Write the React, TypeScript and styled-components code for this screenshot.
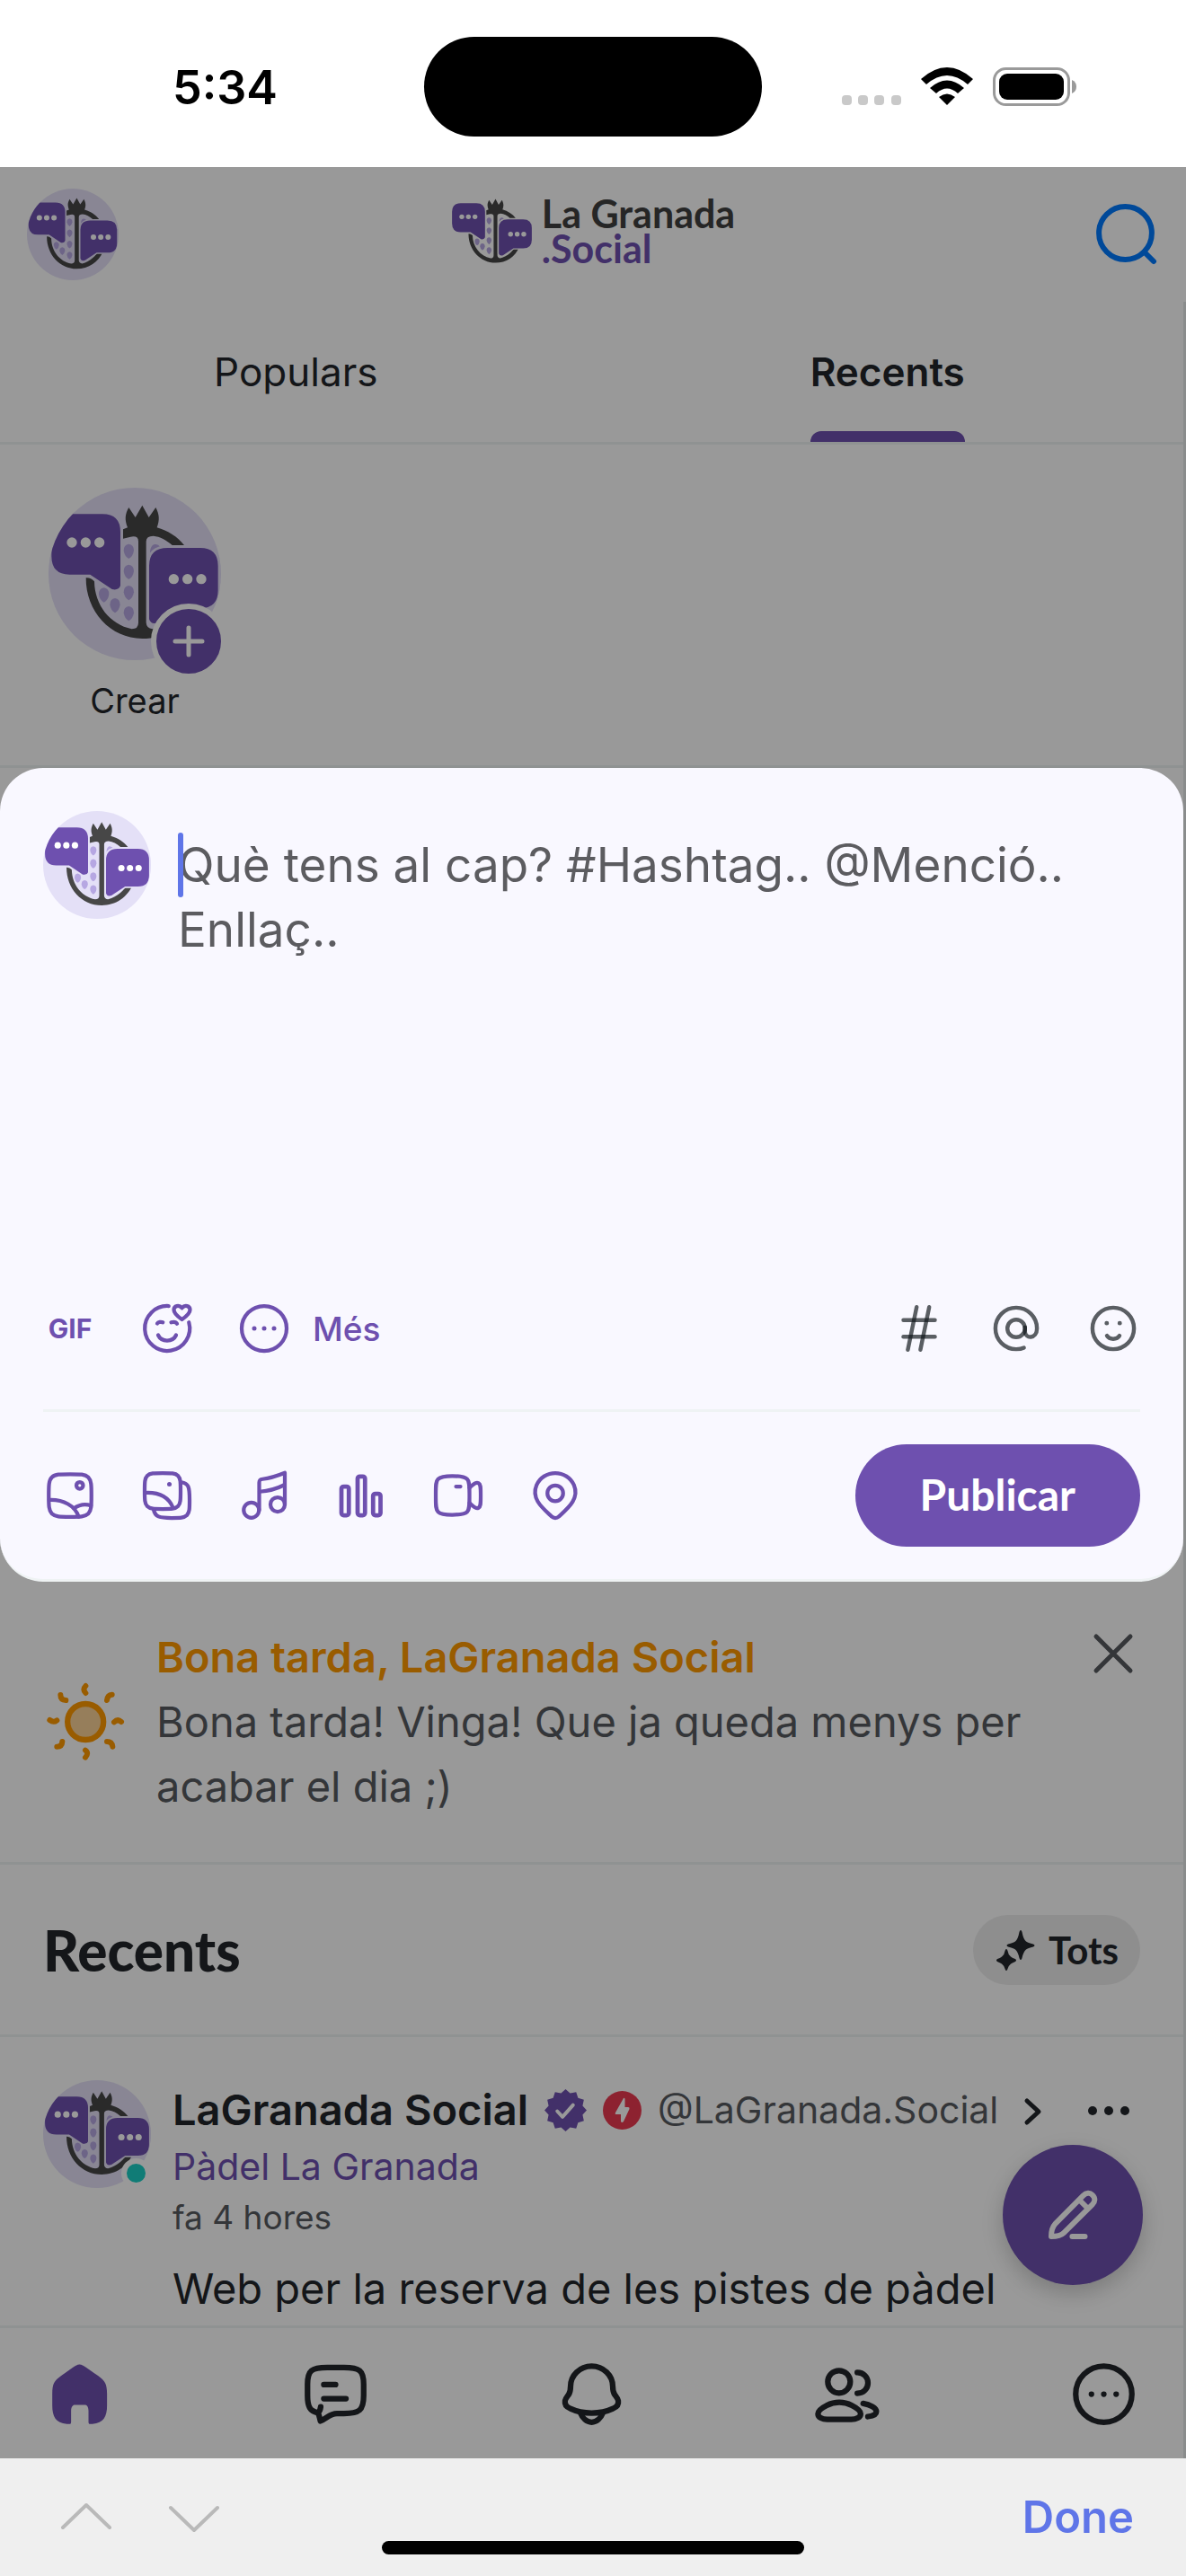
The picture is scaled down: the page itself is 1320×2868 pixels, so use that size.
import React from "react";
import styled, { createGlobalStyle, css } from "styled-components";

const color = {
  ink: "#22262b",
  muted: "#575b5f",
  accent: "#6e50af",
  line: "#eff3f4",
  surface: "#f9f8ff",
  ios: "#5f75e8",
};
const sans = `Inter, "Liberation Sans", sans-serif`;
const display = `Lato, Inter, sans-serif`;

const GlobalStyle = createGlobalStyle`
  *, *::before, *::after { box-sizing: border-box; }
  html, body, #root { margin: 0; }
  body { font-family: ${sans}; color: ${color.ink}; background: #fff; }
  button { font: inherit; color: inherit; background: none; border: 0; padding: 0; margin: 0; }
  a { color: inherit; text-decoration: none; }
  h1, h2, h3, p { margin: 0; }
  svg { display: block; flex: none; }
`;

const Screen = styled.div`
  min-height: 100vh;
  display: flex;
  flex-direction: column;
`;

/* ---------- device chrome ---------- */

const StatusBar = styled.div`
  display: grid;
  grid-template-columns: 1fr 376px 1fr;
  align-items: center;
  padding: 41px 0 34px;
`;
const Clock = styled.time`
  padding: 3px 0 0 192px;
  color: #000;
  font-size: 52px;
  line-height: 60px;
  font-weight: 600;
`;
const Island = styled.div`
  height: 111px;
  border-radius: 56px;
  background: #000;
`;
const Signals = styled.div`
  display: flex;
  align-items: center;
  justify-content: flex-end;
  gap: 22px;
  padding-right: 121px;
`;

const KeyboardBar = styled.div`
  position: relative;
  display: flex;
  align-items: center;
  justify-content: space-between;
  height: 131px;
  padding: 0 58px 0 66px;
  background: #efefef;
`;
const Arrows = styled.div`
  display: flex;
  gap: 60px;
`;
const DoneButton = styled.button`
  color: ${color.ios};
  font-size: 49px;
  line-height: 60px;
  font-weight: 600;
`;
const HomeIndicator = styled.div`
  position: absolute;
  left: 50%;
  bottom: 24px;
  width: 470px;
  height: 15px;
  margin-left: -235px;
  border-radius: 8px;
  background: #000;
`;

/* ---------- page ---------- */

const Page = styled.div`
  position: relative;
  flex: 1;
  display: flex;
  flex-direction: column;
  background: #fff;
`;
const Scrim = styled.div`
  position: absolute;
  inset: 0;
  z-index: 1;
  background: rgba(0, 0, 0, 0.4);
`;
const Header = styled.header`
  display: grid;
  grid-template-columns: 1fr auto 1fr;
  align-items: center;
  height: 150px;
  padding: 0 30px;
`;
const Brand = styled.a`
  display: flex;
  align-items: center;
  gap: 10px;
  padding-bottom: 8px;
`;
const BrandName = styled.span`
  font-family: ${display};
  font-size: 43px;
  line-height: 39px;
  font-weight: 700;
  color: #404040;
`;
const BrandAccent = styled.span`
  display: block;
  color: ${color.accent};
`;
const SearchButton = styled.button`
  justify-self: end;
  color: #007aff;
`;
const Feed = styled.main`
  flex: 1;
  display: flex;
  flex-direction: column;
  border-right: 3px solid #e6e9ea;
`;
const Tabs = styled.nav`
  display: grid;
  grid-template-columns: 1fr 1fr;
  height: 159px;
  border-bottom: 3px solid ${color.line};
`;
const Tab = styled.a<{ $active?: boolean }>`
  position: relative;
  justify-self: center;
  display: flex;
  align-items: center;
  font-size: 44px;
  font-weight: ${(p) => (p.$active ? 600 : 400)};
  ${(p) =>
    p.$active &&
    css`
      &::after {
        content: "";
        position: absolute;
        left: 0;
        right: 0;
        bottom: 0;
        height: 12px;
        border-radius: 12px 12px 0 0;
        background: ${color.accent};
      }
    `}
`;
const Stories = styled.section`
  display: flex;
  padding: 48px 48px 45px;
  border-bottom: 3px solid ${color.line};
`;
const Story = styled.button`
  display: flex;
  flex-direction: column;
  align-items: center;
  gap: 18px;
  width: 204px;
  font-size: 38px;
  line-height: 54px;
`;
const AvatarFrame = styled.span`
  position: relative;
  display: block;
  flex: none;
`;
const PlusBadge = styled.span`
  position: absolute;
  right: -6px;
  bottom: -21px;
  display: grid;
  place-items: center;
  width: 84px;
  height: 84px;
  border: 6px solid #fff;
  border-radius: 50%;
  background: ${color.accent};
  color: #fff;
`;

/* ---------- composer ---------- */

const Composer = styled.form`
  position: relative;
  z-index: 2;
  padding: 48px 48px 36px;
  border-bottom: 3px solid ${color.line};
  border-radius: 48px;
  background: ${color.surface};
`;
const Editor = styled.div`
  display: flex;
  align-items: flex-start;
  gap: 30px;
  height: 546px;
`;
const TextWrap = styled.label`
  position: relative;
  flex: 1;
  padding-top: 24px;
`;
const TextArea = styled.textarea`
  display: block;
  width: 100%;
  height: 432px;
  padding: 0;
  border: 0;
  outline: 0;
  resize: none;
  overflow: hidden;
  background: transparent;
  color: ${color.ink};
  caret-color: transparent;
  font-family: ${sans};
  font-size: 53px;
  line-height: 72px;
  &::placeholder {
    color: #5c5c60;
    opacity: 1;
  }
`;
const Caret = styled.span`
  position: absolute;
  left: 0;
  top: 24px;
  width: 6px;
  height: 72px;
  border-radius: 3px;
  background: ${color.ios};
`;
const ToolRow = styled.div`
  display: flex;
  align-items: center;
  justify-content: space-between;
  & + & {
    margin-top: 60px;
    padding-top: 36px;
    border-top: 3px solid ${color.line};
  }
`;
const Tools = styled.div<{ $muted?: boolean }>`
  display: flex;
  align-items: center;
  gap: 48px;
  color: ${(p) => (p.$muted ? "rgba(15, 20, 25, 0.68)" : color.accent)};
`;
const Tool = styled.button`
  display: flex;
  align-items: center;
  justify-content: center;
  gap: 24px;
  min-width: 60px;
  height: 60px;
  font-size: 37px;
  font-weight: 500;
`;
const GifMark = styled.span`
  width: 60px;
  text-align: center;
  font-size: 30px;
  font-weight: 700;
`;
const PublishButton = styled.button`
  height: 114px;
  padding: 0 72px 4px;
  border-radius: 57px;
  background: ${color.accent};
  color: #fff;
  font-family: ${display};
  font-size: 48px;
  font-weight: 700;
`;

/* ---------- feed ---------- */

const Notice = styled.section`
  display: flex;
  align-items: center;
  gap: 32px;
  padding: 48px;
  border-bottom: 3px solid ${color.line};
  font-size: 47px;
  line-height: 72px;
  color: ${color.muted};
`;
const NoticeText = styled.div`
  flex: 1;
`;
const NoticeTitle = styled.h2`
  font-size: 47px;
  line-height: 72px;
  font-weight: 600;
  color: #ff9900;
`;
const CloseButton = styled.button`
  align-self: flex-start;
  padding: 0 6px;
`;
const FeedHead = styled.div`
  display: flex;
  align-items: center;
  justify-content: space-between;
  height: 192px;
  padding: 0 48px;
  border-bottom: 3px solid ${color.line};
`;
const FeedTitle = styled.h1`
  font-family: ${display};
  font-size: 62px;
  line-height: 72px;
  font-weight: 900;
`;
const FilterButton = styled.button`
  display: flex;
  align-items: center;
  gap: 14px;
  height: 78px;
  padding: 0 24px;
  border-radius: 39px;
  background: #ededed;
  font-family: ${display};
  font-size: 42px;
  font-weight: 700;
`;
const Post = styled.article`
  flex: 1;
  display: flex;
  align-items: flex-start;
  gap: 24px;
  padding: 48px 48px 0;
`;
const OnlineDot = styled.span`
  position: absolute;
  right: 0;
  bottom: 0;
  width: 33px;
  height: 33px;
  border: 6px solid #fff;
  border-radius: 50%;
  background: #1ccfc5;
`;
const PostBody = styled.div`
  flex: 1;
  min-width: 0;
`;
const PostHead = styled.div`
  display: flex;
  align-items: center;
  gap: 18px;
  height: 66px;
  white-space: nowrap;
`;
const Author = styled.a`
  font-size: 47px;
  line-height: 60px;
  font-weight: 600;
`;
const Handle = styled.span`
  font-size: 41px;
  line-height: 60px;
  color: ${color.muted};
`;
const PostMenu = styled.button`
  margin-left: auto;
  padding: 9px 12px;
`;
const Community = styled.a`
  display: block;
  font-size: 41px;
  line-height: 60px;
  color: ${color.accent};
`;
const Posted = styled.time`
  display: block;
  font-size: 37px;
  line-height: 54px;
  color: ${color.muted};
`;
const PostText = styled.p`
  padding-top: 16px;
  font-size: 47px;
  line-height: 72px;
`;
const ComposeFab = styled.button`
  position: absolute;
  right: 48px;
  bottom: 193px;
  display: grid;
  place-items: center;
  width: 156px;
  height: 156px;
  border-radius: 50%;
  background: ${color.accent};
  color: #fff;
  box-shadow: 0 9px 24px rgba(0, 0, 0, 0.2);
`;
const BottomNav = styled.nav`
  display: flex;
  align-items: center;
  justify-content: space-between;
  height: 148px;
  padding: 2px 51px 0;
  border-top: 3px solid ${color.line};
`;
const NavItem = styled.a<{ $active?: boolean }>`
  color: ${(p) => (p.$active ? color.accent : color.ink)};
`;

/* ---------- drawings ---------- */

function Icon({
  size = 60,
  stroke = 1.7,
  children,
}: {
  size?: number;
  stroke?: number;
  children: React.ReactNode;
}) {
  return (
    <svg
      width={size}
      height={size}
      viewBox="0 0 24 24"
      fill="none"
      stroke="currentColor"
      strokeWidth={stroke}
      strokeLinecap="round"
      strokeLinejoin="round"
      aria-hidden="true"
    >
      {children}
    </svg>
  );
}

const seeds = [
  [310, 250],
  [310, 319],
  [310, 389],
  [310, 458],
  [264, 431],
  [227, 396],
];

function Pomegranate({ halo, hole }: { halo: string; hole: string }) {
  return (
    <g>
      <path
        d="M355 98 L377 138 L400 105 C412 128 414 146 404 172 C440 182 474 204 495 231 L455 231 C436 214 414 202 392 200 Q368 200 368 218 V490 Q369 509 389 511 C440 497 478 462 495 422 L520 434 C492 500 430 543 355 543 C248 543 166 452 167 340 Q182 338 195 352 C196 432 248 496 320 511 Q342 511 342 490 V218 Q342 198 316 203 L291 209 V178 L306 172 C296 146 297 128 310 105 L332 138 Z"
        fill="#474747"
      />
      {seeds.map(([x, y]) => (
        <path
          key={`${x}-${y}`}
          d={`M${x} ${y - 23} q17 2 17 22 q-3 20 -17 27 q-14 -7 -17 -27 q0 -20 17 -22Z`}
          fill="#b6a7e2"
        />
      ))}
      <path d="M381 254 C382 234 392 227 400 228 Q410 229 414 236 Q396 242 381 258Z" fill="#b6a7e2" />
      <path
        d="M112 127 H222 Q282 127 282 187 V366 Q276 383 254 378 L181 329 H112 Q52 329 52 268 V187 Q52 127 112 127Z"
        fill={color.accent}
        stroke={halo}
        strokeWidth="16"
        paintOrder="stroke"
      />
      <path
        d="M440 240 H548 Q608 240 608 300 V382 Q608 442 548 442 H480 L407 490 Q384 498 378 478 V300 Q378 240 440 240Z"
        fill={color.accent}
        stroke={halo}
        strokeWidth="16"
        paintOrder="stroke"
      />
      {[120, 166, 212].map((x) => (
        <circle key={x} cx={x} cy="222" r="17" fill={hole} />
      ))}
      {[460, 506, 552].map((x) => (
        <circle key={x} cx={x} cy="344" r="17" fill={hole} />
      ))}
    </g>
  );
}

function Avatar({ size }: { size: number }) {
  const id = React.useId();
  return (
    <svg width={size} height={size} viewBox="42 39 576 576" role="img" aria-label="LaGranada Social">
      <clipPath id={id}>
        <circle cx="330" cy="327" r="288" />
      </clipPath>
      <g clipPath={`url(#${id})`}>
        <rect x="42" y="39" width="576" height="576" fill="#e4e0f7" />
        <Pomegranate halo="#e4e0f7" hole="#ffffff" />
      </g>
    </svg>
  );
}

function Verified() {
  const pts = Array.from({ length: 24 }, (_, i) => {
    const r = i % 2 ? 20 : 24;
    const a = (i * Math.PI) / 12;
    return `${(24 + r * Math.cos(a)).toFixed(2)},${(24 + r * Math.sin(a)).toFixed(2)}`;
  }).join(" ");
  return (
    <svg width="47" height="47" viewBox="0 0 48 48" aria-hidden="true">
      <polygon points={pts} fill={color.accent} />
      <path d="M14.5 25 L20.5 31.5 L32.5 18" fill="none" stroke="#fff" strokeWidth="4" strokeLinecap="round" strokeLinejoin="round" />
    </svg>
  );
}

function Bolt() {
  return (
    <svg width="43" height="43" viewBox="0 0 43 43" aria-hidden="true">
      <circle cx="21.5" cy="21.5" r="21.5" fill="#eb3a50" />
      <path d="M23 8 L14 24 Q13 26 15 26 H20 V34 Q21 36 23 34 L29.500 20 Q30 18 28 18 H24.500 V9 Q24 7 23 8Z" fill="#fff" />
    </svg>
  );
}

function Sun() {
  return (
    <svg width="94" height="94" viewBox="26 30 282 282" aria-hidden="true">
      <circle cx="167.500" cy="171" r="60" fill="#fad298" stroke="#ff9900" strokeWidth="19" />
      <g fill="none" stroke="#ff9900" strokeWidth="18" strokeLinecap="round" strokeLinejoin="round">
        <path d="M168 51 Q156 63 168 75" />
        <path d="M256 80 Q241 81 239 99" />
        <path d="M263 172 Q275 160 287 171" />
        <path d="M239 237 Q256 237 258 254" />
        <path d="M167 266 Q180 276 167 290" />
        <path d="M72 254 Q89 254 90 237" />
        <path d="M48 165 Q61 175 72 166" />
        <path d="M84 81 Q84 98 102 99" />
      </g>
    </svg>
  );
}

function MoreIcon({ size = 60, stroke = 1.7 }: { size?: number; stroke?: number }) {
  return (
    <Icon size={size} stroke={stroke}>
      <circle cx="12" cy="12" r="10" />
      <path d="M7.600 12h.01M12 12h.01M16.400 12h.01" strokeWidth={2} />
    </Icon>
  );
}

export default function App() {
  return (
    <Screen>
      <GlobalStyle />
      <StatusBar>
        <Clock>5:34</Clock>
        <Island />
        <Signals>
          <svg width="66" height="43" viewBox="0 0 66 43" fill="#c9c9c9" aria-hidden="true">
            {[0, 18, 36, 55].map((x) => (
              <rect key={x} x={x} y="31" width="11" height="11" rx="4" />
            ))}
          </svg>
          <svg width="58" height="43" viewBox="0 0 58 43" aria-hidden="true">
            <path d="M0 13 Q29 -13 58 13 L52 19 Q29 -1 6 19Z" />
            <path d="M10 23 Q29 6 48 23 L41 29 Q29 18 17 29Z" />
            <path d="M20 33 Q29 26 38 33 L29 42Z" />
          </svg>
          <svg width="94" height="43" viewBox="0 0 94 43" aria-hidden="true">
            <rect x="1.500" y="1.500" width="83" height="40" rx="13" fill="none" stroke="#9a9a9a" strokeWidth="3" />
            <rect x="7" y="7" width="72" height="29" rx="9" />
            <path d="M88 14 Q93 16 93 21.500 Q93 27 88 29Z" fill="#9a9a9a" />
          </svg>
        </Signals>
      </StatusBar>

      <Page>
        <Header>
          <Avatar size={102} />
          <Brand href="#inici">
            <svg width="91" height="74" viewBox="45 90 570 460" aria-hidden="true">
              <Pomegranate halo="#ffffff" hole="#ffffff" />
            </svg>
            <BrandName>
              La Granada
              <BrandAccent>.Social</BrandAccent>
            </BrandName>
          </Brand>
          <SearchButton type="button" aria-label="Cerca">
            <Icon size={72} stroke={2}>
              <circle cx="11.500" cy="11.500" r="9.800" />
              <path d="M18.500 18.500L22 22" />
            </Icon>
          </SearchButton>
        </Header>

        <Feed>
          <Tabs>
            <Tab href="#populars">Populars</Tab>
            <Tab href="#recents" $active>
              Recents
            </Tab>
          </Tabs>

          <Stories>
            <Story type="button">
              <AvatarFrame>
                <Avatar size={192} />
                <PlusBadge>
                  <Icon size={48} stroke={2.5}>
                    <path d="M12 4.500V19.500M4.500 12H19.500" />
                  </Icon>
                </PlusBadge>
              </AvatarFrame>
              Crear
            </Story>
          </Stories>

          <Composer onSubmit={(e) => e.preventDefault()}>
            <Editor>
              <Avatar size={120} />
              <TextWrap>
                <TextArea
                  aria-label="Publicació"
                  placeholder="Què tens al cap? #Hashtag.. @Menció.. Enllaç.."
                />
                <Caret />
              </TextWrap>
            </Editor>

            <ToolRow>
              <Tools>
                <Tool type="button">
                  <GifMark>GIF</GifMark>
                </Tool>
                <Tool type="button" aria-label="Sentiment">
                  <Icon>
                    <path d="M12.700 2.020A10 10 0 1 0 21.700 9.300" />
                    <path d="M18.600 8C17 6.900 15 5.400 15 3.700C15 1.900 17.300 1.300 18.600 2.900C19.900 1.300 22.200 1.900 22.200 3.700C22.200 5.400 20.200 6.900 18.600 8Z" />
                    <path d="M8 15C9.500 18.200 14.500 18.200 16 15" />
                    <path d="M7.600 9.800C8 9.100 9.300 9 10.100 9.300M13.800 9.300C14.900 9 16 9.200 16.400 9.900" />
                  </Icon>
                </Tool>
                <Tool type="button">
                  <MoreIcon />
                  Més
                </Tool>
              </Tools>
              <Tools $muted>
                <Tool type="button" aria-label="Etiqueta">
                  <Icon size={56} stroke={1.900}>
                    <path d="M4.500 8H19.500" />
                    <path d="M4.500 16H19.500" />
                    <path d="M10.800 1.800L6.600 22.200" />
                    <path d="M16.800 1.800L12.600 22.200" />
                  </Icon>
                </Tool>
                <Tool type="button" aria-label="Menció">
                  <Icon size={56} stroke={1.900}>
                    <circle cx="12" cy="12" r="4.200" />
                    <path d="M16.200 11.500V13.500C16.200 17 21.900 17.300 21.900 12A9.900 9.900 0 1 0 12 21.900C13.500 21.900 14.700 21.700 15.700 21.200" />
                  </Icon>
                </Tool>
                <Tool type="button" aria-label="Emoji">
                  <Icon size={56} stroke={1.900}>
                    <circle cx="12" cy="12" r="9.900" />
                    <path d="M9 15.500C10.200 17.500 13.800 17.500 15 15.500" />
                    <path d="M8.900 9.500h.01M15.100 9.500h.01" strokeWidth={2.1} />
                  </Icon>
                </Tool>
              </Tools>
            </ToolRow>

            <ToolRow>
              <Tools>
                <Tool type="button" aria-label="Imatge">
                  <Icon>
                    <path d="M2.500 12C2.500 7.520 2.500 5.280 3.890 3.890C5.280 2.500 7.520 2.500 12 2.500C16.480 2.500 18.720 2.500 20.110 3.890C21.500 5.280 21.500 7.520 21.500 12C21.500 16.480 21.500 18.720 20.110 20.110C18.720 21.500 16.480 21.500 12 21.500C7.520 21.500 5.280 21.500 3.890 20.110C2.500 18.720 2.500 16.480 2.500 12Z" />
                    <circle cx="16.300" cy="7.500" r="1.500" />
                    <path d="M2.800 14C9 13.800 14.300 16.500 15.800 21.500" />
                    <path d="M13.700 17.700C16 16.100 18.800 15.600 21.300 16.500" />
                  </Icon>
                </Tool>
                <Tool type="button" aria-label="Àlbum">
                  <Icon>
                    <path d="M2 10C2 6.230 2 4.340 3.170 3.170C4.340 2 6.230 2 10 2C13.770 2 15.660 2 16.830 3.170C18 4.340 18 6.230 18 10C18 13.770 18 15.660 16.830 16.830C15.660 18 13.770 18 10 18C6.230 18 4.340 18 3.170 16.830C2 15.660 2 13.770 2 10Z" />
                    <path d="M2.200 10.800C8.500 10.500 12.700 12.800 14.600 17.400" />
                    <path d="M18.300 6.100C21.500 6.600 22 8 22 14C22 18 22 19.500 20.800 20.800C19.500 22 18 22 14 22C8.500 22 6.600 21.500 6 18.300" />
                    <path d="M13 7h.01" strokeWidth={2} />
                  </Icon>
                </Tool>
                <Tool type="button" aria-label="Música">
                  <Icon>
                    <circle cx="6.300" cy="18.500" r="3.400" />
                    <circle cx="18" cy="16" r="3.200" />
                    <path d="M9.800 18.500V6.300C9.800 5 10.300 4.800 11.300 4.700C15 4.300 18 3.200 21.200 1.900V16" />
                    <path d="M10 10.300C14.500 10 18 8.800 21 7.300" />
                  </Icon>
                </Tool>
                <Tool type="button" aria-label="Enquesta">
                  <Icon stroke={1.900}>
                    <rect x="3.200" y="8" width="3.300" height="12.800" rx="1" />
                    <rect x="10.400" y="3.500" width="3.300" height="17.300" rx="1" />
                    <rect x="17.300" y="11.200" width="3.300" height="9.600" rx="1" />
                  </Icon>
                </Tool>
                <Tool type="button" aria-label="Vídeo">
                  <Icon>
                    <path d="M2 11C2 7.400 2 5.750 3.030 4.720C4.050 3.700 5.700 3.300 9.300 3.300C13 3.300 14.950 3.700 15.970 4.720C17 5.750 17 7.400 17 11V13C17 16.600 17 18.250 15.970 19.280C14.950 20.300 13 20.600 9.300 20.600C5.700 20.600 4.050 20.300 3.030 19.280C2 18.250 2 16.600 2 13V11Z" />
                    <path d="M17 8.600C19.300 6.400 20.200 6 21 6.500C22 7 22 8.400 22 11.200V12.800C22 15.600 22 17 21 17.500C20.200 17.900 19.300 17.500 17 15.300" />
                    <path d="M11 8H13" />
                  </Icon>
                </Tool>
                <Tool type="button" aria-label="Ubicació">
                  <Icon>
                    <path d="M13.600 21.370C13.180 21.770 12.600 22 12 22C11.400 22 10.820 21.770 10.380 21.370C6.410 17.630 1.090 13.450 3.690 7.380C5.090 4.100 8.460 2 12 2C15.540 2 18.910 4.100 20.320 7.380C22.910 13.440 17.600 17.640 13.600 21.370Z" />
                    <circle cx="12" cy="11" r="3.500" />
                  </Icon>
                </Tool>
              </Tools>
              <PublishButton type="submit">Publicar</PublishButton>
            </ToolRow>
          </Composer>

          <Notice>
            <Sun />
            <NoticeText>
              <NoticeTitle>Bona tarda, LaGranada Social</NoticeTitle>
              <p>Bona tarda! Vinga! Que ja queda menys per acabar el dia ;)</p>
            </NoticeText>
            <CloseButton type="button" aria-label="Tanca">
              <svg width="48" height="64" viewBox="0 0 48 64" fill="none" stroke={color.muted} strokeWidth="5" strokeLinecap="round">
                <path d="M5 13L43 51M43 13L5 51" />
              </svg>
            </CloseButton>
          </Notice>

          <FeedHead>
            <FeedTitle>Recents</FeedTitle>
            <FilterButton type="button">
              <svg width="46" height="46" viewBox="0 0 46 46" fill="currentColor" aria-hidden="true">
                <path d="M29 1Q30 1 30.500 3Q32 11 35 13.500Q37 15 43 16.500Q46 18 43 19.500Q37 21 35 22.500Q32 25 30.500 32Q30 34 29 34Q28 34 27.500 32Q26 25 23 22.500Q21 21 15 19.500Q12 18 15 16.500Q21 15 23 13.500Q26 11 27.500 3Q28 1 29 1Z" />
                <path d="M13 22Q14 22 14.500 24Q15 28 18 30.500Q20 32 23 33Q25 34.500 23 36Q20 37 18 38.500Q15 41 14.500 44Q14 46 13 46Q12 46 11.500 44Q11 41 8 38.500Q6 37 3 36Q1 34.500 3 33Q6 32 8 30.500Q11 28 11.500 24Q12 22 13 22Z" />
              </svg>
              Tots
            </FilterButton>
          </FeedHead>

          <Post>
            <AvatarFrame>
              <Avatar size={120} />
              <OnlineDot />
            </AvatarFrame>
            <PostBody>
              <PostHead>
                <Author href="#perfil">LaGranada Social</Author>
                <Verified />
                <Bolt />
                <Handle>@LaGranada.Social</Handle>
                <svg width="36" height="36" viewBox="0 0 36 36" fill="none" stroke="currentColor" strokeWidth="5" strokeLinecap="round" strokeLinejoin="round" aria-hidden="true">
                  <path d="M14 8L27 20L14 32" />
                </svg>
                <PostMenu type="button" aria-label="Opcions">
                  <svg width="46" height="12" viewBox="0 0 46 12" fill="currentColor">
                    <circle cx="5" cy="7" r="5" />
                    <circle cx="23" cy="7" r="5" />
                    <circle cx="41" cy="7" r="5" />
                  </svg>
                </PostMenu>
              </PostHead>
              <Community href="#padel">Pàdel La Granada</Community>
              <Posted>fa 4 hores</Posted>
              <PostText>Web per la reserva de les pistes de pàdel</PostText>
            </PostBody>
          </Post>

          <BottomNav>
            <NavItem href="#inici" aria-label="Inici" $active>
              <Icon size={75} stroke={2}>
                <path
                  fill="currentColor"
                  stroke="none"
                  d="M12 1.400C10.900 1.400 9.800 2.400 5.400 5.500C3 7.200 2.300 8.200 2.300 12V16C2.300 20 3.500 22.300 7.500 22.600C9 22.800 9 22.600 9 21.500V18C9 16.300 9.800 15.800 10.300 15.800H13.800C14.600 15.800 15.200 16.400 15.200 18V21.500C15.200 22.600 15.200 22.800 16.600 22.600C20.600 22.300 21.800 20 21.800 16V12C21.800 8.200 21 7.200 18.700 5.500C14.200 2.400 13.100 1.400 12 1.400Z"
                />
              </Icon>
            </NavItem>
            <NavItem href="#xats" aria-label="Missatges">
              <Icon size={75} stroke={2}>
                <path d="M5.700 18.700C2.800 18 2 16.500 2 12.500V8.500C2 3.500 3.500 2.500 9 2.500H15C20.500 2.500 22 3.500 22 8.500V12.500C22 17.800 20.500 18.900 15 18.900H12.500C10 18.900 9 20.500 6.600 21.600C6.300 20.500 6.200 19.500 5.700 18.700ZM5.700 18.700C6.300 18.200 6.600 17.400 6.700 16.500" />
                <path d="M7.800 8.600H12M7.800 13.600H15.700" />
              </Icon>
            </NavItem>
            <NavItem href="#avisos" aria-label="Notificacions">
              <Icon size={75} stroke={2}>
                <path d="M2.530 14.390C2.320 15.750 3.270 16.690 4.430 17.150C8.890 19.250 15.110 19.250 19.570 17.150C20.730 16.690 21.680 15.750 21.470 14.390C21.340 13.560 20.690 12.870 20.210 12.190C19.590 11.300 19.520 10.320 19.520 9.280C19.520 5.260 16.160 2 12 2C7.840 2 4.480 5.260 4.480 9.280C4.480 10.320 4.410 11.300 3.790 12.190C3.310 12.870 2.660 13.560 2.530 14.390Z" />
                <path d="M8 18.700C8.700 20.500 10.200 22 12 22C13.800 22 15.300 20.500 16 18.700" />
              </Icon>
            </NavItem>
            <NavItem href="#gent" aria-label="Comunitat">
              <Icon size={75} stroke={2}>
                <circle cx="8.900" cy="7.600" r="4" />
                <path d="M15.400 4.300C17.700 4.300 19.200 6 19.200 8C19.200 10 17.700 11.700 15.400 11.700" />
                <path d="M4.600 16C3 16.800 1.400 17.800 1.400 19C1.400 20.300 3 21 4.700 21H13.300C15 21 16.600 20.300 16.600 19C16.600 17.800 15 16.800 13.400 16C10.700 14.600 7.300 14.600 4.600 16Z" />
                <path d="M17.500 15.300C20 15.700 22.200 17 22.200 18.200C22.200 19.200 20.800 19.800 19.200 20" />
              </Icon>
            </NavItem>
            <NavItem href="#mes" aria-label="Més">
              <MoreIcon size={75} stroke={2} />
            </NavItem>
          </BottomNav>
        </Feed>

        <ComposeFab type="button" aria-label="Escriu">
          <Icon size={72} stroke={2}>
            <path d="M4 20C4 17.600 4.300 16.600 5.400 15.400L15.800 4.900C17 3.700 18.300 3.600 19.300 4.600C20.400 5.700 20.400 7 19.200 8.200L8.700 18.600C7.600 19.700 6.400 20 4 20Z" />
            <path d="M14.500 6.500L17.500 9.500" />
            <path d="M11.800 20H16.500" />
          </Icon>
        </ComposeFab>
        <Scrim />
      </Page>

      <KeyboardBar>
        <Arrows>
          <button type="button" aria-label="Camp anterior">
            <svg width="60" height="36" viewBox="0 0 60 36" fill="none" stroke="#b9b9b9" strokeWidth="4" strokeLinecap="round" strokeLinejoin="round">
              <path d="M4 29L30 4L56 29" />
            </svg>
          </button>
          <button type="button" aria-label="Camp següent">
            <svg width="60" height="36" viewBox="0 0 60 36" fill="none" stroke="#b9b9b9" strokeWidth="4" strokeLinecap="round" strokeLinejoin="round">
              <path d="M4 7L30 32L56 7" />
            </svg>
          </button>
        </Arrows>
        <DoneButton type="button">Done</DoneButton>
        <HomeIndicator />
      </KeyboardBar>
    </Screen>
  );
}
